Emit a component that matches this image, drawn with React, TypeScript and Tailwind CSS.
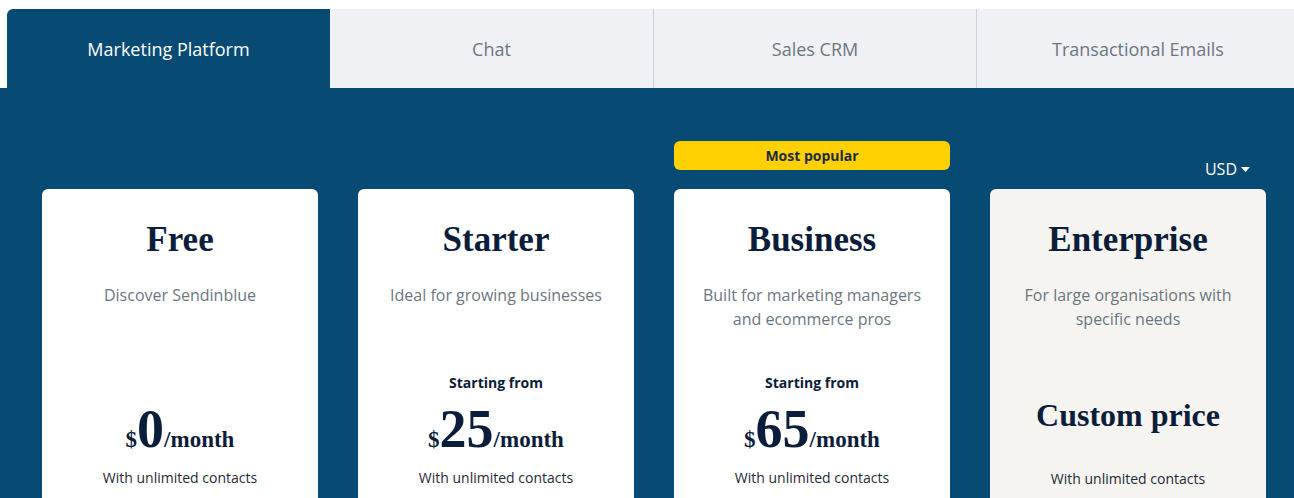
import React from "react";

const tabs = ["Marketing Platform", "Chat", "Sales CRM", "Transactional Emails"];

type Plan = {
  name: string;
  desc: string[];
  from?: boolean;
  price?: string;
  custom?: boolean;
  popular?: boolean;
};

const plans: Plan[] = [
  { name: "Free", desc: ["Discover Sendinblue"], price: "0" },
  { name: "Starter", desc: ["Ideal for growing businesses"], from: true, price: "25" },
  {
    name: "Business",
    desc: ["Built for marketing managers", "and ecommerce pros"],
    from: true,
    price: "65",
    popular: true,
  },
  { name: "Enterprise", desc: ["For large organisations with", "specific needs"], custom: true },
];

const sans = "font-['Open_Sans',sans-serif]";
const serif = "font-['Liberation_Serif',serif]";

function PlanCard({ plan }: { plan: Plan }) {
  return (
    <div
      className={
        "w-[276px] h-[320px] rounded-md text-center pt-[31px] " +
        (plan.custom ? "bg-[#f5f4f0]" : "bg-white")
      }
    >
      <h2 className={serif + " text-[35px] leading-[40px] font-bold text-[#0b1d3a]"}>{plan.name}</h2>
      <div className={sans + " mt-[23px] h-[90px] text-base leading-6 text-[#6b7682]"}>
        {plan.desc.map((d) => (
          <p key={d}>{d}</p>
        ))}
      </div>
      {plan.custom ? (
        <>
          <p className={serif + " mt-[22px] text-[32px] leading-[40px] font-bold text-[#0b1d3a]"}>
            Custom price
          </p>
          <p className={sans + " mt-[34px] text-sm leading-5 text-[#1f2a37]"}>With unlimited contacts</p>
        </>
      ) : (
        <>
          <p className={sans + " h-5 text-sm leading-5 font-bold text-[#0b1d3a]"}>
            {plan.from ? "Starting from" : ""}
          </p>
          <div className={serif + " mt-[9px] flex items-baseline justify-center font-bold text-[#0b1d3a] leading-none"}>
            <span className="text-[23px]">$</span>
            <span className="text-[54px]">{plan.price}</span>
            <span className="text-[23px]">/month</span>
          </div>
          <p className={sans + " mt-3 text-sm leading-5 text-[#1f2a37]"}>With unlimited contacts</p>
        </>
      )}
    </div>
  );
}

export default function App() {
  return (
    <div className="w-[1294px] h-[498px] overflow-hidden bg-white pt-[9px]">
      <div className="flex pl-[7px]">
        {tabs.map((t, i) => (
          <div
            key={t}
            className={
              sans +
              " h-[79px] w-[323px] shrink-0 flex items-center justify-center text-lg " +
              (i === 0
                ? "bg-[#074a73] text-white rounded-tl-md"
                : "bg-[#eff1f5] text-[#6e7781]") +
              (i > 1 ? " border-l border-[#c8d3de]" : "")
            }
          >
            {t}
          </div>
        ))}
      </div>
      <div className="bg-[#074a73] h-[410px] pl-[42px] pt-[53px]">
        <div className="flex gap-10">
          {plans.map((p) => (
            <div key={p.name} className="flex flex-col">
              <div className="h-[48px] relative">
                {p.popular && (
                  <div
                    className={
                      sans +
                      " h-[29px] rounded-md bg-[#ffd100] flex items-center justify-center text-sm font-bold text-[#1d2b3f]"
                    }
                  >
                    Most popular
                  </div>
                )}
                {p.custom && (
                  <div
                    className={
                      sans +
                      " absolute right-4 bottom-2 flex items-center gap-1 text-base leading-6 text-white"
                    }
                  >
                    USD
                    <svg width="9" height="5" viewBox="0 0 9 5">
                      <path d="M0 0h9L4.5 5z" fill="white" />
                    </svg>
                  </div>
                )}
              </div>
              <PlanCard plan={p} />
            </div>
          ))}
        </div>
      </div>
    </div>
  );
}
